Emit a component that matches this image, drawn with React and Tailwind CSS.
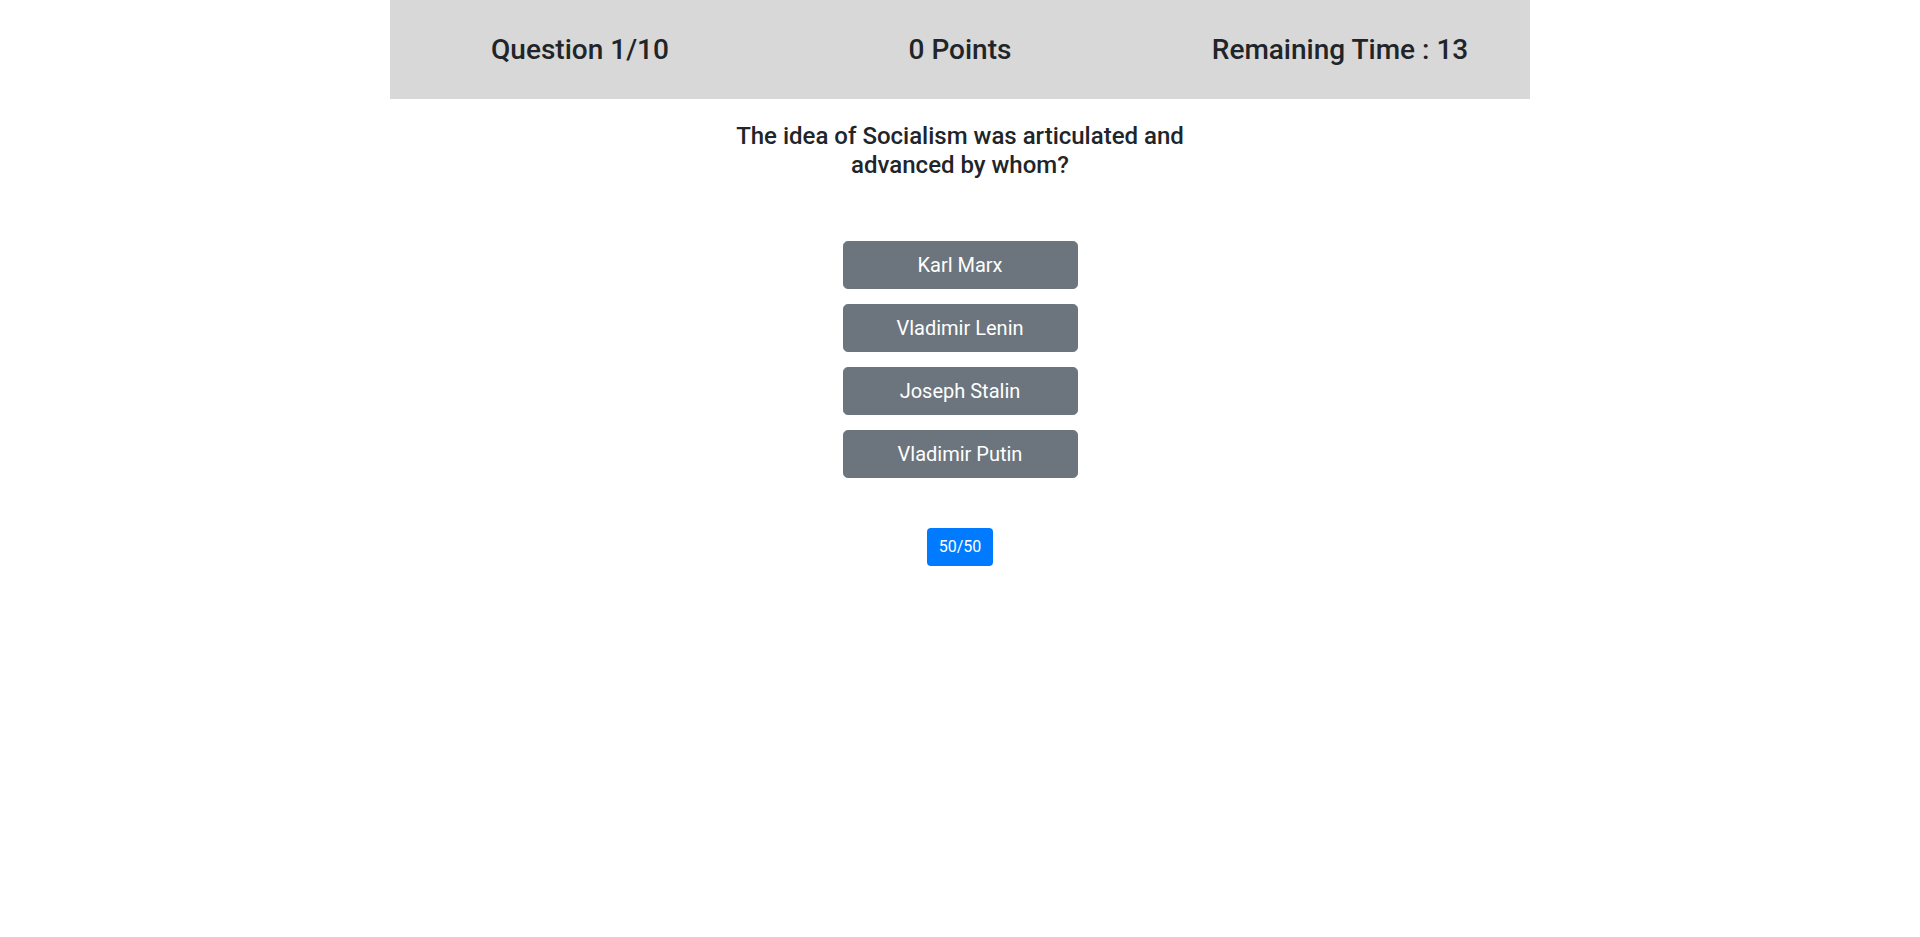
import React from "react";

const answers = ["Karl Marx", "Vladimir Lenin", "Joseph Stalin", "Vladimir Putin"];

export default function App() {
    return (
        <div className="min-h-screen bg-white text-[#212529] font-['Roboto','Liberation_Sans',Arial,sans-serif]">
            <div className="w-[1140px] mx-auto">
                {/* top bar */}
                <div className="h-[99px] bg-[#d8d8d8] grid grid-cols-3 items-center text-center text-[28px] leading-[34px] font-medium">
                    <div>Question 1/10</div>
                    <div>0 Points</div>
                    <div>Remaining Time : 13</div>
                </div>

                <h4 className="w-[520px] mx-auto mt-[23px] text-center text-[24px] leading-[28.8px] font-medium">
                    The idea of Socialism was articulated and advanced by whom?
                </h4>

                <div className="mt-[61px] flex flex-col items-center gap-[15px]">
                    {answers.map((a) => (
                        <button
                            key={a}
                            className="w-[235px] h-[48px] rounded-[4.8px] border border-[#6c757d] bg-[#6c757d] text-white text-[20px]"
                        >
                            {a}
                        </button>
                    ))}
                </div>

                <div className="mt-[50px] flex justify-center">
                    <button className="w-[66px] h-[38px] rounded-[4px] bg-[#007bff] text-white text-[16px]">
                        50/50
                    </button>
                </div>
            </div>
        </div>
    );
}
